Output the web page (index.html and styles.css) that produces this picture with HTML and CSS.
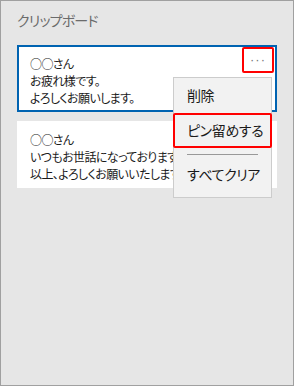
FILE: index.html
```html
<!DOCTYPE html>
<html lang="ja">
  <head>
    <meta charset="utf-8" />
    <meta name="viewport" content="width=device-width, initial-scale=1" />
    <title>クリップボード</title>
    <link rel="stylesheet" href="styles.css">
  </head>
  <body>
    <div class="panel">
      <h1 class="title">クリップボード</h1>

      <div class="clip-list">
        <!-- selected item -->
        <div class="clip selected">
          <p class="clip-text">○○さん<br/>お疲れ様です。<br/>よろしくお願いします。</p>
          <button class="more-btn" type="button">&middot;&middot;&middot;</button>
        </div>

        <div class="clip">
          <p class="clip-text">○○さん<br/>いつもお世話になっております。<br/>以上、よろしくお願いいたします。</p>
        </div>
      </div>

      <!-- context menu opened from the ... button -->
      <ul class="menu">
        <li class="menu-item">削除</li>
        <li class="menu-item marked">ピン留めする</li>
        <li class="menu-sep"></li>
        <li class="menu-item">すべてクリア</li>
      </ul>
    </div>
  </body>
</html>
```

FILE: styles.css
```css
body{
  margin: 0;
  font-family: "Noto Sans CJK JP", "Noto Sans", sans-serif;
  font-feature-settings: "palt";
}

.panel{
  position: relative;
  box-sizing: border-box;
  width: 294px;
  height: 386px;
  border: 1px solid #a0a0a0;
  background-color: #e6e6e6;
  padding: 0 16px;
}

.title{
  margin: 0;
  padding-top: 9px;
  height: 35px;
  font-size: 14px;
  font-weight: normal;
  letter-spacing: -0.8px;
  line-height: 20px;
  color: #6b6b6b;
}

.clip-list{
  display: flex;
  flex-direction: column;
  gap: 9px;
}

.clip{
  display: flex;
  align-items: flex-start;
  box-sizing: border-box;
  height: 67px;
  border: 2px solid #fff;
  background-color: #fff;
  overflow: hidden;
}

.clip.selected{
  border-color: #0063b1;
}

.clip-text{
  flex: 1;
  margin: 0;
  padding: 8px 0 0 11px;
  font-size: 12px;
  letter-spacing: -0.6px;
  line-height: 17px;
  color: #1a1a1a;
  white-space: nowrap;
}

.more-btn{
  box-sizing: border-box;
  width: 32px;
  height: 26px;
  margin-right: 1px;
  padding: 0;
  border: 2px solid #ff0000;
  border-radius: 2px;
  background-color: #fff;
  color: #777;
  font-size: 13px;
  letter-spacing: 1px;
  line-height: 18px;
}

.menu{
  position: absolute;
  left: 172px;
  top: 76px;
  box-sizing: border-box;
  width: 99px;
  height: 121px;
  margin: 0;
  padding: 0;
  list-style: none;
  border: 1px solid #cccccc;
  background-color: #f2f2f2;
}

.menu-item{
  box-sizing: border-box;
  height: 35px;
  padding-left: 13px;
  font-size: 14px;
  letter-spacing: -0.4px;
  line-height: 35px;
  color: #1a1a1a;
  white-space: nowrap;
}

.menu-item.marked{
  margin: 0 -1px;
  padding-left: 12px;
  border: 2px solid #ff0000;
  border-radius: 2px;
  line-height: 31px;
}

.menu-sep{
  height: 1px;
  margin: 6px 13px 2px 13px;
  background-color: #999;
}
```
